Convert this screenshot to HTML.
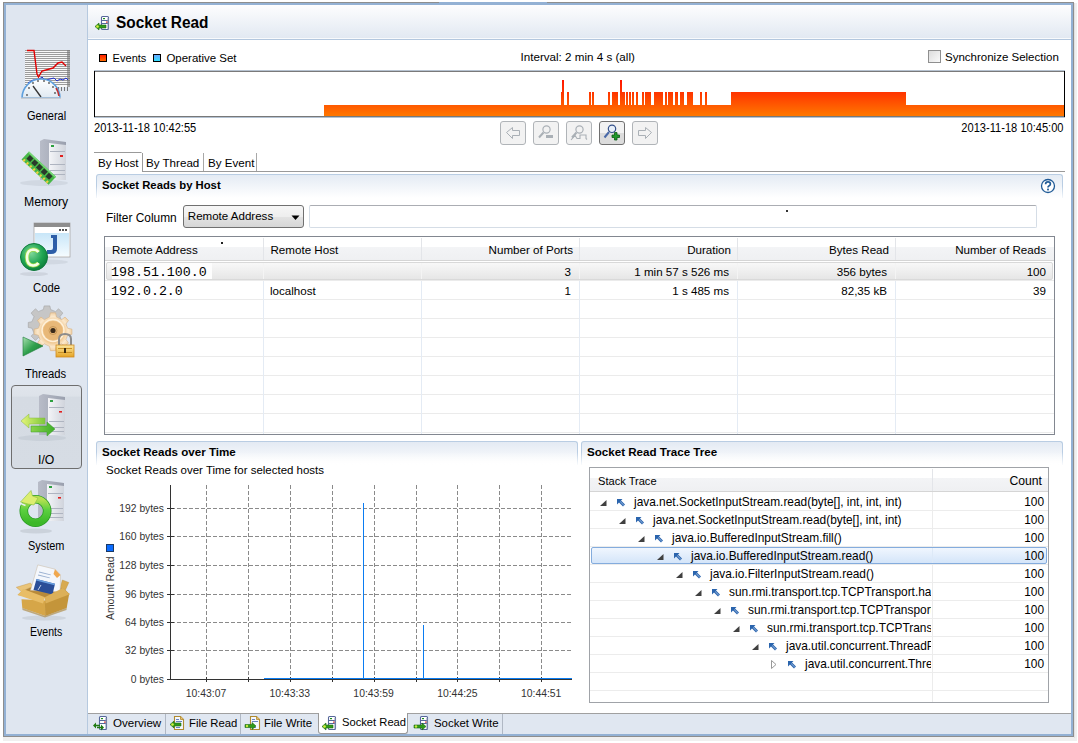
<!DOCTYPE html>
<html><head><meta charset="utf-8">
<style>
*{margin:0;padding:0;box-sizing:border-box}
html,body{width:1078px;height:743px;overflow:hidden;background:#fff}
body{position:relative;font-family:"Liberation Sans",sans-serif;font-size:11.6px;color:#000}
.a{position:absolute}
.t{position:absolute;white-space:nowrap;line-height:1}
.r{text-align:right}
</style></head><body>
<!-- outside area -->
<div class="a" style="left:3px;top:737px;width:1074px;height:4px;background:#f0f0f0"></div>
<div class="a" style="left:1074px;top:3px;width:3px;height:738px;background:#f0f0f0"></div>
<div class="a" style="left:1074px;top:3px;width:1px;height:735px;background:#e2e2e2"></div>
<!-- frame -->
<div class="a" style="left:3px;top:2px;width:1071px;height:735px;border:1px solid #8e8e8e;background:#93b1d4"></div>
<div class="a" style="left:439px;top:2px;width:108px;height:1px;background:#93b1d4"></div>
<!-- inner area -->
<div class="a" style="left:6px;top:5px;width:1065px;height:729px;background:#fff"></div>
<!-- sidebar -->
<div class="a" style="left:6px;top:5px;width:81px;height:729px;background:#dfe6f0"></div>
<div class="a" style="left:87px;top:5px;width:1px;height:729px;background:#b6c9df"></div>

<!-- sidebar selected box -->
<div class="a" style="left:11px;top:385px;width:71px;height:84px;border:1px solid #6e6e6e;border-radius:4px;background:linear-gradient(#e0e5ec 0%,#dde2e9 12%,#d5dbe3 14%,#d6dce4 100%)"></div>
<!-- sidebar labels -->
<div class="t" style="left:26.5px;top:109.54px;font-size:12.0px;transform:scaleX(0.916);transform-origin:0 0">General</div>
<div class="t" style="left:23.8px;top:195.54px;font-size:12.0px;transform:scaleX(1.020);transform-origin:0 0">Memory</div>
<div class="t" style="left:32.6px;top:281.54px;font-size:12.0px;transform:scaleX(0.941);transform-origin:0 0">Code</div>
<div class="t" style="left:24.9px;top:367.54px;font-size:12.0px;transform:scaleX(0.936);transform-origin:0 0">Threads</div>
<div class="t" style="left:37.7px;top:453.54px;font-size:12.0px;transform:scaleX(1.019);transform-origin:0 0">I/O</div>
<div class="t" style="left:27.7px;top:539.54px;font-size:12.0px;transform:scaleX(0.910);transform-origin:0 0">System</div>
<div class="t" style="left:29.9px;top:625.54px;font-size:12.0px;transform:scaleX(0.880);transform-origin:0 0">Events</div>
<svg class="a" style="left:0;top:0" width="88" height="713" viewBox="0 0 88 713">
<defs>
<linearGradient id="gauge" x1="0" y1="0" x2="0" y2="1"><stop offset="0" stop-color="#ffffff"/><stop offset="1" stop-color="#dfe9f2"/></linearGradient>
<linearGradient id="srv" x1="0" y1="0" x2="1" y2="0"><stop offset="0" stop-color="#b8bcc8"/><stop offset="1" stop-color="#9aa0ae"/></linearGradient>
<linearGradient id="srvf" x1="0" y1="0" x2="1" y2="0"><stop offset="0" stop-color="#f4f5f8"/><stop offset="1" stop-color="#d0d4dc"/></linearGradient>
<linearGradient id="win" x1="0" y1="0" x2="0" y2="1"><stop offset="0" stop-color="#c8e6f8"/><stop offset="1" stop-color="#f4fbff"/></linearGradient>
<radialGradient id="cg" cx="0.4" cy="0.35" r="0.7"><stop offset="0" stop-color="#7fd89a"/><stop offset="0.6" stop-color="#1fa552"/><stop offset="1" stop-color="#0c7a38"/></radialGradient>
<radialGradient id="gear" cx="0.5" cy="0.5" r="0.5"><stop offset="0" stop-color="#d9a868"/><stop offset="0.55" stop-color="#efc58c"/><stop offset="0.8" stop-color="#fbe8cc"/><stop offset="1" stop-color="#f0d2a8"/></radialGradient>
<linearGradient id="play" x1="0" y1="0" x2="1" y2="1"><stop offset="0" stop-color="#a8e0b0"/><stop offset="0.5" stop-color="#2fa04c"/><stop offset="1" stop-color="#1a7a34"/></linearGradient>
<linearGradient id="lock" x1="0" y1="0" x2="0" y2="1"><stop offset="0" stop-color="#fce7a0"/><stop offset="1" stop-color="#e5a424"/></linearGradient>
<linearGradient id="arL" x1="0" y1="0" x2="1" y2="0"><stop offset="0" stop-color="#e6f57a"/><stop offset="1" stop-color="#7cc83a"/></linearGradient>
<linearGradient id="arR" x1="0" y1="0" x2="1" y2="0"><stop offset="0" stop-color="#8bd34a"/><stop offset="1" stop-color="#3eae2a"/></linearGradient>
<linearGradient id="box" x1="0" y1="0" x2="0" y2="1"><stop offset="0" stop-color="#e8bf62"/><stop offset="1" stop-color="#c8963a"/></linearGradient>
<linearGradient id="paper" x1="0" y1="0" x2="0" y2="1"><stop offset="0" stop-color="#f6f8fc"/><stop offset="0.5" stop-color="#e8eef8"/><stop offset="0.52" stop-color="#4a84d0"/><stop offset="1" stop-color="#1c3f86"/></linearGradient>
</defs>
<!-- General -->
<g>
<rect x="25" y="50" width="45" height="37" fill="#f8f8f8"/>
<g fill="#9c9c9c">
<rect x="25" y="50" width="45" height="1"/><rect x="25" y="52" width="45" height="1"/><rect x="25" y="54" width="45" height="1"/><rect x="25" y="56" width="45" height="1"/><rect x="25" y="58" width="45" height="1"/><rect x="25" y="60" width="45" height="1"/><rect x="25" y="62" width="45" height="1"/><rect x="25" y="64" width="45" height="1"/><rect x="25" y="66" width="45" height="1"/><rect x="25" y="68" width="45" height="1"/><rect x="25" y="70" width="45" height="1"/><rect x="25" y="72" width="45" height="1"/><rect x="25" y="74" width="45" height="1"/><rect x="25" y="76" width="45" height="1"/><rect x="25" y="78" width="45" height="1"/><rect x="25" y="80" width="45" height="1"/><rect x="25" y="82" width="45" height="1"/><rect x="25" y="84" width="45" height="1"/>
</g>
<g fill="#777">
<rect x="67" y="50" width="3" height="37" opacity="0.6"/>
<rect x="58" y="87" width="1" height="4"/><rect x="61" y="87" width="1" height="4"/><rect x="64" y="87" width="1" height="4"/><rect x="67" y="87" width="1" height="4"/>
</g>
<polyline points="27,50.5 34,50.5 37,74 38.5,77 42,71 53,68 58,63 62,62 66,66" fill="none" stroke="#e00000" stroke-width="1.4"/>
<polyline points="28,83 33,80 38,80 42,77 45,80 50,79 54,78 57,81 60,79 63,80 66,78 68,80" fill="none" stroke="#2030d0" stroke-width="1"/>
<path d="M22 98 A19 19 0 0 1 60 98 Z" fill="url(#gauge)" stroke="#5ea0de" stroke-width="1.6"/>
<path d="M56 88 A19 19 0 0 1 59 96" fill="none" stroke="#c03030" stroke-width="1.6"/>
<g fill="#555">
<circle cx="27" cy="95" r="0.9"/><circle cx="29" cy="88" r="0.9"/><circle cx="33" cy="83" r="0.9"/><circle cx="38" cy="81" r="0.9"/><circle cx="44" cy="81" r="0.9"/><circle cx="49" cy="83" r="0.9"/><circle cx="53" cy="87" r="0.9"/><circle cx="55" cy="93" r="0.9"/>
</g>
<line x1="33" y1="86" x2="41" y2="97" stroke="#333" stroke-width="1.3"/>
<rect x="21" y="97.5" width="40" height="1.5" fill="#c8ccd2"/>
</g>
<!-- Memory -->
<g>
<ellipse cx="44" cy="183" rx="24" ry="3" fill="#cdd4de" opacity="0.8"/>
<path d="M40 141 L44 139 L66 142 L66 180 L40 180 Z" fill="url(#srv)"/>
<path d="M49 143 L66 145 L66 180 L49 180 Z" fill="url(#srvf)"/>
<rect x="51" y="145" width="3" height="2" fill="#2ea040"/>
<rect x="60" y="155" width="3" height="2" fill="#e02020"/>
<g fill="#aeb4c0"><rect x="50" y="151" width="15" height="1"/><rect x="50" y="164" width="15" height="1"/><rect x="50" y="170" width="15" height="1"/><rect x="50" y="174" width="15" height="1"/></g>
<g transform="translate(29,151.5) rotate(43)">
<rect x="0" y="0" width="37" height="11" fill="#48b848"/>
<rect x="0" y="0" width="37" height="1.5" fill="#7ad87a"/>
<g fill="#2a3a2a"><rect x="3" y="2" width="5" height="5"/><rect x="9.5" y="2" width="5" height="5"/><rect x="16" y="2" width="5" height="5"/><rect x="22.5" y="2" width="5" height="5"/><rect x="29" y="2" width="5" height="5"/></g>
<g fill="#f0d040"><rect x="1.5" y="8.5" width="2" height="2.5"/><rect x="6" y="8.5" width="2" height="2.5"/><rect x="10.5" y="8.5" width="2" height="2.5"/><rect x="15" y="8.5" width="2" height="2.5"/><rect x="19.5" y="8.5" width="2" height="2.5"/><rect x="24" y="8.5" width="2" height="2.5"/><rect x="28.5" y="8.5" width="2" height="2.5"/><rect x="33" y="8.5" width="2" height="2.5"/></g>
</g>
</g>
<!-- Code -->
<g>
<ellipse cx="46" cy="262" rx="22" ry="2.5" fill="#cdd4de" opacity="0.8"/>
<rect x="34" y="223" width="36" height="34" fill="#fff" stroke="#a8a8a8" stroke-width="0.8"/>
<rect x="34" y="223" width="36" height="4" fill="#8e8e8e"/>
<rect x="35" y="233" width="34" height="23" fill="url(#win)"/>
<g fill="#555"><rect x="59" y="229" width="2" height="2"/><rect x="62" y="229" width="2" height="2"/><rect x="65" y="229" width="2" height="2"/></g>
<path d="M51 235 L57 235 L57 249 Q57 254 51 254 L47 254 L47 250 L51 250 Q53 250 53 248 L53 238 L51 238 Z" fill="#2d5ea8"/>
<ellipse cx="34" cy="274" rx="14" ry="2" fill="#c9d0da" opacity="0.8"/>
<circle cx="34" cy="257" r="13.5" fill="url(#cg)" stroke="#0f7a3c" stroke-width="1"/>
<path d="M38.5 252 Q36.5 249.5 33 249.5 Q27 250 27 257.5 Q27 265 33 265.5 Q36.5 265.5 38.5 263" fill="none" stroke="#9ad84a" stroke-width="4.2"/><path d="M38.5 252 Q36.5 249.5 33 249.5 Q27 250 27 257.5 Q27 265 33 265.5 Q36.5 265.5 38.5 263" fill="none" stroke="#f6ffe8" stroke-width="2.6"/>
</g>
<!-- Threads -->
<g>
<g transform="translate(51,327)">
<path d="M-4 -21 L4 -21 L5 -16 L12 -13 L16 -17 L22 -11 L18 -6 L21 1 L26 2 L26 9 L21 10 L18 17 L22 21 L16 27 L12 23 L5 26 L4 31 L-4 31 L-5 26 L-12 23 L-16 27 L-22 21 L-18 17 L-21 10 L-26 9 L-26 2 L-21 1 L-18 -6 L-22 -11 L-16 -17 L-12 -13 L-5 -16 Z" transform="translate(-4,-6) scale(0.72)" fill="#c6c6c6" stroke="#a0a0a0" stroke-width="0.8"/>
<path d="M-3 -20 L3 -20 L4 -15 L10 -12 L14 -15 L18 -11 L15 -7 L17 -2 L22 -1 L22 5 L17 6 L15 11 L18 15 L14 19 L10 16 L4 19 L3 24 L-3 24 L-4 19 L-10 16 L-14 19 L-18 15 L-15 11 L-17 6 L-22 5 L-22 -1 L-17 -2 L-15 -7 L-18 -11 L-14 -15 L-10 -12 L-4 -15 Z" transform="translate(2,3) scale(0.86)" fill="url(#gear)" stroke="#d8b080" stroke-width="0.7"/>
<circle cx="2" cy="3.5" r="11" fill="none" stroke="#fff4e0" stroke-width="1.5" opacity="0.9"/><circle cx="2" cy="3.5" r="9.5" fill="#e8b878"/><circle cx="2" cy="3.5" r="2.6" fill="#3a2a1a"/><circle cx="2" cy="3.5" r="4" fill="none" stroke="#c89858" stroke-width="1"/>
</g>
<path d="M23 337 L43 346 L23 356 Z" fill="url(#play)" stroke="#1b7a38" stroke-width="0.6"/>
<path d="M59 346 L59 339 Q59 334 65 334 Q71 334 71 339 L71 346" fill="none" stroke="#8c8c8c" stroke-width="2"/>
<rect x="56" y="345" width="18" height="12" fill="url(#lock)" stroke="#d08a20" stroke-width="0.8"/>
<g fill="#c89028"><rect x="58" y="348" width="14" height="1"/><rect x="58" y="352" width="14" height="1"/></g>
<rect x="64" y="348" width="2" height="5" fill="#3a2a10"/>
</g>
<!-- I/O -->
<g>
<ellipse cx="42" cy="438" rx="24" ry="3" fill="#c6cdd6" opacity="0.8"/>
<path d="M39 396 L43 394 L65 397 L65 435 L39 435 Z" fill="url(#srv)"/>
<path d="M48 398 L65 400 L65 435 L48 435 Z" fill="url(#srvf)"/>
<rect x="50" y="400" width="3" height="2" fill="#2ea040"/>
<rect x="59" y="411" width="3" height="1.6" fill="#e02020"/>
<g fill="#aeb4c0"><rect x="49" y="407" width="15" height="1"/><rect x="49" y="421" width="15" height="1"/><rect x="49" y="427" width="15" height="1"/><rect x="49" y="431" width="15" height="1"/></g>
<path d="M21 421 L29 414 L29 418 L45 418 L45 424 L29 424 L29 428 Z" fill="url(#arL)" stroke="#88b840" stroke-width="0.5"/>
<path d="M55 429 L47 422 L47 426 L31 426 L31 432 L47 432 L47 436 Z" fill="url(#arR)" stroke="#3a9a2a" stroke-width="0.5"/>
</g>
<!-- System -->
<g>
<path d="M38 482 L42 480 L64 483 L64 521 L38 521 Z" fill="url(#srv)"/>
<path d="M47 484 L64 486 L64 521 L47 521 Z" fill="url(#srvf)"/>
<rect x="49" y="486" width="3" height="2" fill="#2ea040"/>
<rect x="58" y="497" width="3" height="1.6" fill="#e02020"/>
<g fill="#aeb4c0"><rect x="48" y="493" width="15" height="1"/><rect x="48" y="508" width="15" height="1"/><rect x="48" y="513" width="15" height="1"/><rect x="48" y="517" width="15" height="1"/></g>
<ellipse cx="36" cy="531" rx="16" ry="2.5" fill="#c6cdd6" opacity="0.8"/>
<defs><linearGradient id="ring" x1="0" y1="0" x2="0" y2="1"><stop offset="0" stop-color="#b8e050"/><stop offset="0.45" stop-color="#5cd040"/><stop offset="1" stop-color="#3cb828"/></linearGradient></defs>
<circle cx="35.5" cy="511" r="11.7" fill="none" stroke="#2a9a24" stroke-width="8.6"/>
<circle cx="35.5" cy="511" r="11.7" fill="none" stroke="url(#ring)" stroke-width="7"/>
<path d="M19.5 503 L25.5 505.5" stroke="#e8eef4" stroke-width="1.4"/>
<path d="M20.5 502 L31 490.5 L32.5 496 L38 498 L34 505 L28 504 Z" fill="#dcee70" stroke="#8cc040" stroke-width="0.6"/>
</g>
<!-- Events -->
<g>
<ellipse cx="44" cy="618" rx="22" ry="2.5" fill="#c6cdd6" opacity="0.7"/>
<path d="M62.4 580 L68.8 582.5 L65.4 590 L60.2 587.7 Z" fill="#d8aa50" stroke="#b88a30" stroke-width="0.4"/>
<path d="M16.3 587.3 L30.5 583 L32.7 586.4 L21.5 591.6 Z" fill="#eac478" stroke="#c09040" stroke-width="0.4"/>
<path d="M21.5 591.6 L32.7 586.4 L60.2 587.7 L65.4 590 L69.7 594.2 L44.7 598 L17.6 595 Z" fill="#b88a3a"/>
<path d="M37.8 564.9 L55 569.2 L60.5 575 L60.2 592 L30.5 590.3 Z" fill="#f4f7fc" stroke="#c8b8a0" stroke-width="0.5"/>
<path d="M55 569.2 L60.5 575 L57 578 L53.5 574 Z" fill="#f0a850"/>
<g fill="#9ab0d0"><rect x="39" y="573" width="12" height="0.9" transform="rotate(14 45 573)"/><rect x="38" y="576" width="12" height="0.9" transform="rotate(14 44 576)"/></g>
<path d="M36.5 579.1 L55 583.7 L52.5 594.5 L33.5 590 Z" fill="#2a4e98"/>
<path d="M36.5 579.1 L55 583.7 L54.6 585.2 L36.1 580.6 Z" fill="#6aa0e0"/>
<path d="M38 590 L41 585" stroke="#e8f0ff" stroke-width="0.8"/>
<path d="M21.5 599.3 L45.2 600.5 L45.4 615.9 L22.3 608 Z" fill="#d6a648"/>
<path d="M44.9 600.5 L69.3 593.3 L66.7 608 L45.2 615.9 Z" fill="#c4953a"/>
<path d="M17.6 595 L23.2 589 L45 597.2 L43 603.6 Z" fill="#e8bd66"/>
<path d="M44.7 597.2 L62.8 588.1 L69.7 594.2 L45.6 603.6 Z" fill="#dcb058"/>
<path d="M22.3 608 L44.3 615.7 L45.6 615.7 L66.7 608 L66.5 610 L45 617.5 L22.5 610 Z" fill="#a88030" opacity="0.6"/>
</g>
</svg>

<!-- header -->
<div class="a" style="left:88px;top:5px;width:983px;height:33px;background:linear-gradient(#fdfdfe,#e2e9f2)"></div>
<div class="a" style="left:88px;top:38px;width:983px;height:1px;background:#f8fafc"></div>
<div class="a" style="left:88px;top:39px;width:983px;height:1px;background:#b3c7de"></div>
<div class="t" style="left:115.5px;top:14.6px;font-size:15.8px;font-weight:bold;transform:scaleX(0.975);transform-origin:0 0">Socket Read</div>


<!-- legend -->
<div class="a" style="left:99px;top:54px;width:8px;height:8px;border:1px solid #000;background:linear-gradient(#ff2000,#ff6a00)"></div>
<div class="t" style="left:112.6px;top:52.9px;font-size:11.05px">Events</div>
<div class="a" style="left:153px;top:54px;width:8px;height:8px;border:1px solid #000;background:linear-gradient(#6aa8ff,#30e0ff)"></div>
<div class="t" style="left:166.4px;top:52.6px;font-size:11.48px">Operative Set</div>
<div class="t" style="left:520.5px;top:51.3px;font-size:11.64px">Interval: 2 min 4 s (all)</div>
<div class="a" style="left:928px;top:50px;width:13px;height:13px;border:1px solid #8f8f8f;background:linear-gradient(135deg,#dcdcdc,#fafafa)"></div>
<div class="t" style="left:945px;top:52px;font-size:11.5px">Synchronize Selection</div>
<!-- timeline chart -->
<svg class="a" style="left:0;top:0" width="1078" height="130" viewBox="0 0 1078 130">
<defs><linearGradient id="og" x1="0" y1="72" x2="0" y2="116" gradientUnits="userSpaceOnUse"><stop offset="0" stop-color="#ff0000"/><stop offset="0.45" stop-color="#ff3300"/><stop offset="1" stop-color="#ff7800"/></linearGradient></defs>
<rect x="94" y="70" width="971" height="1" fill="#b6c2d0"/>
<rect x="94" y="71" width="971" height="1" fill="#7a7a7a"/>
<rect x="94" y="71" width="1" height="46" fill="#000"/>
<rect x="1064" y="71" width="1" height="46" fill="#000"/>
<g fill="url(#og)"><rect x="324" y="105" width="740" height="11"/><rect x="561" y="92" width="1" height="13"/><rect x="567" y="92" width="2" height="13"/><rect x="589" y="92" width="2" height="13"/><rect x="592" y="92" width="2" height="13"/><rect x="608" y="92" width="2" height="13"/><rect x="612" y="92" width="6" height="13"/><rect x="622" y="92" width="3" height="13"/><rect x="626" y="92" width="2" height="13"/><rect x="629" y="92" width="2" height="13"/><rect x="632" y="92" width="2" height="13"/><rect x="636" y="92" width="2" height="13"/><rect x="642" y="92" width="2" height="13"/><rect x="645" y="92" width="6" height="13"/><rect x="654" y="92" width="9" height="13"/><rect x="665" y="92" width="2" height="13"/><rect x="668" y="92" width="5" height="13"/><rect x="675" y="92" width="3" height="13"/><rect x="680" y="92" width="4" height="13"/><rect x="687" y="92" width="6" height="13"/><rect x="700" y="92" width="2" height="13"/><rect x="705" y="92" width="2" height="13"/><rect x="731" y="92" width="175" height="13"/><rect x="562" y="80" width="2" height="25"/><rect x="620" y="80" width="2" height="25"/></g>
<rect x="94" y="116" width="971" height="1" fill="#000" opacity="0.53"/><rect x="94" y="117" width="971" height="1" fill="#b4c2d2"/>
</svg>
<div class="t" style="left:94px;top:121.8px;font-size:12px;transform:scaleX(0.925);transform-origin:0 0">2013-11-18 10:42:55</div>
<div class="t r" style="right:14px;top:121.8px;font-size:12px;transform:scaleX(0.925);transform-origin:100% 0">2013-11-18 10:45:00</div>
<!-- nav buttons -->
<div class="a" style="left:500px;top:121px;width:26px;height:24px;border:1px solid #b0b4b8;border-radius:3px;background:#f2f2f2"></div>
<div class="a" style="left:533px;top:121px;width:26px;height:24px;border:1px solid #b0b4b8;border-radius:3px;background:#f2f2f2"></div>
<div class="a" style="left:566px;top:121px;width:26px;height:24px;border:1px solid #b0b4b8;border-radius:3px;background:#f2f2f2"></div>
<div class="a" style="left:599px;top:121px;width:26px;height:24px;border:1px solid #707070;border-radius:3px;background:linear-gradient(#f2f2f2 50%,#dcdcdc 50%)"></div>
<div class="a" style="left:632px;top:121px;width:26px;height:24px;border:1px solid #b0b4b8;border-radius:3px;background:#f2f2f2"></div>


<!-- sub tabs -->
<div class="a" style="left:94px;top:152px;width:47px;height:1px;background:#9a9a9a"></div>
<div class="a" style="left:142px;top:153px;width:1px;height:19px;background:#9a9a9a"></div><div class="a" style="left:141px;top:152px;width:1px;height:1px;background:#c8c8c8"></div>
<div class="a" style="left:143px;top:171px;width:922px;height:1px;background:#9a9a9a"></div>
<div class="a" style="left:203px;top:153px;width:1px;height:18px;background:#a8a8a8"></div>
<div class="a" style="left:256px;top:153px;width:1px;height:18px;background:#a8a8a8"></div>
<div class="t" style="left:98px;top:157px;font-size:11.6px">By Host</div>
<div class="t" style="left:146px;top:157px;font-size:11.6px">By Thread</div>
<div class="t" style="left:208px;top:157px;font-size:11.6px">By Event</div>
<!-- group box: Socket Reads by Host -->
<div class="a" style="left:96px;top:174px;width:967px;height:24px;border:1px solid #b9cde3;border-bottom:none;border-radius:3px 3px 0 0;background:linear-gradient(#e4ebf4,#fff)"></div>
<div class="a" style="left:95px;top:186px;width:3px;height:14px;background:linear-gradient(rgba(255,255,255,0),#fff)"></div>
<div class="a" style="left:1061px;top:186px;width:3px;height:14px;background:linear-gradient(rgba(255,255,255,0),#fff)"></div>
<div class="t" style="left:102px;top:180px;font-size:11.3px;font-weight:bold">Socket Reads by Host</div>
<svg class="a" style="left:1040px;top:178px" width="16" height="16" viewBox="0 0 16 16"><circle cx="8" cy="8" r="6.5" fill="#fff" stroke="#1f5a96" stroke-width="1.3"/><path d="M5.6 6.2 Q5.6 3.9 8 3.9 Q10.4 3.9 10.4 6 Q10.4 7.3 8.9 8 Q8 8.5 8 9.6" fill="none" stroke="#1f5a96" stroke-width="1.7"/><rect x="7.1" y="10.6" width="1.8" height="1.8" fill="#1f5a96"/></svg>
<!-- filter -->
<div class="t" style="left:106px;top:212.5px;font-size:11.9px">Filter Column</div>
<div class="a" style="left:183px;top:205px;width:121px;height:23px;border:1px solid #707070;border-radius:3px;background:linear-gradient(#f6f6f6 0%,#eeeeee 50%,#e3e3e3 51%,#d6d6d6 100%)"></div>
<div class="t" style="left:187.8px;top:211px;font-size:11.56px">Remote Address</div>
<svg class="a" style="left:291px;top:215px" width="9" height="6"><path d="M0.5 0.5 L8.5 0.5 L4.5 5 Z" fill="#000"/></svg>
<div class="a" style="left:309px;top:205px;width:728px;height:23px;border:1px solid #d5dde6;border-top-color:#abadb3;border-radius:2px;background:#fff"></div>
<div class="a" style="left:786px;top:210px;width:2px;height:2px;background:#333"></div>
<div class="a" style="left:221px;top:242px;width:2px;height:2px;background:#222;z-index:5"></div>
<!-- table -->
<div class="a" style="left:104px;top:236px;width:951px;height:199px;border:1px solid #828790;background:#fff"></div>
<div class="a" style="left:105px;top:247px;width:949px;height:13px;background:linear-gradient(#f3f4f6,#eff0f2)"></div>
<div class="a" style="left:105px;top:260px;width:949px;height:1px;background:#d5d5d5"></div>

<div class="a" style="left:263px;top:238px;width:1px;height:22px;background:#e3e5e9"></div>
<div class="a" style="left:421px;top:238px;width:1px;height:22px;background:#e3e5e9"></div>
<div class="a" style="left:579px;top:238px;width:1px;height:22px;background:#e3e5e9"></div>
<div class="a" style="left:737px;top:238px;width:1px;height:22px;background:#e3e5e9"></div>
<div class="a" style="left:895px;top:238px;width:1px;height:22px;background:#e3e5e9"></div>
<div class="a" style="left:105px;top:280px;width:949px;height:1px;background:#ebebeb"></div>
<div class="a" style="left:105px;top:299px;width:949px;height:1px;background:#ebebeb"></div>
<div class="a" style="left:105px;top:318px;width:949px;height:1px;background:#ebebeb"></div>
<div class="a" style="left:105px;top:337px;width:949px;height:1px;background:#ebebeb"></div>
<div class="a" style="left:105px;top:356px;width:949px;height:1px;background:#ebebeb"></div>
<div class="a" style="left:105px;top:375px;width:949px;height:1px;background:#ebebeb"></div>
<div class="a" style="left:105px;top:394px;width:949px;height:1px;background:#ebebeb"></div>
<div class="a" style="left:105px;top:413px;width:949px;height:1px;background:#ebebeb"></div>
<div class="a" style="left:105px;top:432px;width:949px;height:1px;background:#ebebeb"></div>
<div class="a" style="left:263px;top:281px;width:1px;height:153px;background:#e4ebf4"></div>
<div class="a" style="left:421px;top:281px;width:1px;height:153px;background:#e4ebf4"></div>
<div class="a" style="left:579px;top:281px;width:1px;height:153px;background:#e4ebf4"></div>
<div class="a" style="left:737px;top:281px;width:1px;height:153px;background:#e4ebf4"></div>
<div class="a" style="left:895px;top:281px;width:1px;height:153px;background:#e4ebf4"></div>
<div class="a" style="left:106px;top:262px;width:947px;height:18px;border:1px solid #d9d9d9;border-radius:2px;background:linear-gradient(#f8f8f8,#e6e6e6)"></div>
<div class="a" style="left:263px;top:263px;width:1px;height:16px;background:#f4f4f4"></div>
<div class="a" style="left:421px;top:263px;width:1px;height:16px;background:#f4f4f4"></div>
<div class="a" style="left:579px;top:263px;width:1px;height:16px;background:#f4f4f4"></div>
<div class="a" style="left:737px;top:263px;width:1px;height:16px;background:#f4f4f4"></div>
<div class="a" style="left:895px;top:263px;width:1px;height:16px;background:#f4f4f4"></div>
<div class="a" style="left:112px;top:263px;width:100px;height:16px;background:#fdfdfd"></div>
<div class="t" style="left:112px;top:244px">Remote Address</div>
<div class="t" style="left:270.5px;top:244px">Remote Host</div>
<div class="t r" style="right:505px;top:244px">Number of Ports</div>
<div class="t r" style="right:347px;top:244px">Duration</div>
<div class="t r" style="right:189px;top:244px">Bytes Read</div>
<div class="t r" style="right:32px;top:244px">Number of Reads</div>
<div class="t" style="left:111px;top:265.7px;font-family:'Liberation Mono',monospace;font-size:13.3px;color:#000">198.51.100.0</div>
<div class="t r" style="right:507px;top:266px">3</div>
<div class="t r" style="right:349px;top:266px">1 min 57 s 526 ms</div>
<div class="t r" style="right:191px;top:266px">356 bytes</div>
<div class="t r" style="right:32px;top:266px">100</div>
<div class="t" style="left:111px;top:284.7px;font-family:'Liberation Mono',monospace;font-size:13.3px;color:#000">192.0.2.0</div>
<div class="t" style="left:270px;top:285px">localhost</div>
<div class="t r" style="right:507px;top:285px">1</div>
<div class="t r" style="right:349px;top:285px">1 s 485 ms</div>
<div class="t r" style="right:191px;top:285px">82,35 kB</div>
<div class="t r" style="right:32px;top:285px">39</div>
<!-- bottom tab bar -->
<div class="a" style="left:88px;top:713px;width:983px;height:1px;background:#a0a0a0"></div>
<div class="a" style="left:88px;top:714px;width:983px;height:20px;background:#e0e7f1"></div>


<!-- bottom-left panel -->
<div class="a" style="left:96px;top:441px;width:482px;height:24px;border:1px solid #b9cde3;border-bottom:none;border-radius:3px 3px 0 0;background:linear-gradient(#e3eaf3,#fff)"></div>
<div class="a" style="left:95px;top:452px;width:484px;height:14px;background:linear-gradient(rgba(255,255,255,0),#fff)"></div>
<div class="t" style="left:102px;top:446px;font-size:11.6px;font-weight:bold">Socket Reads over Time</div>
<div class="t" style="left:106px;top:465px;font-size:11.47px">Socket Reads over Time for selected hosts</div>
<!-- bottom-right panel -->
<div class="a" style="left:581px;top:441px;width:482px;height:24px;border:1px solid #b9cde3;border-bottom:none;border-radius:3px 3px 0 0;background:linear-gradient(#e3eaf3,#fff)"></div>
<div class="a" style="left:580px;top:452px;width:484px;height:14px;background:linear-gradient(rgba(255,255,255,0),#fff)"></div>
<div class="t" style="left:587px;top:446px;font-size:11.6px;font-weight:bold">Socket Read Trace Tree</div>

<svg class="a" style="left:0;top:0" width="1078" height="743" viewBox="0 0 1078 743" shape-rendering="crispEdges">
<line x1="171" y1="650.5" x2="572" y2="650.5" stroke="#8a8a8a" stroke-dasharray="4 2"/>
<line x1="171" y1="622.5" x2="572" y2="622.5" stroke="#8a8a8a" stroke-dasharray="4 2"/>
<line x1="171" y1="594.5" x2="572" y2="594.5" stroke="#8a8a8a" stroke-dasharray="4 2"/>
<line x1="171" y1="565.5" x2="572" y2="565.5" stroke="#8a8a8a" stroke-dasharray="4 2"/>
<line x1="171" y1="536.5" x2="572" y2="536.5" stroke="#8a8a8a" stroke-dasharray="4 2"/>
<line x1="171" y1="508.5" x2="572" y2="508.5" stroke="#8a8a8a" stroke-dasharray="4 2"/>
<line x1="206.5" y1="485" x2="206.5" y2="679" stroke="#8a8a8a" stroke-dasharray="4 2"/>
<line x1="248.5" y1="485" x2="248.5" y2="679" stroke="#8a8a8a" stroke-dasharray="4 2"/>
<line x1="290.5" y1="485" x2="290.5" y2="679" stroke="#8a8a8a" stroke-dasharray="4 2"/>
<line x1="332.5" y1="485" x2="332.5" y2="679" stroke="#8a8a8a" stroke-dasharray="4 2"/>
<line x1="374.5" y1="485" x2="374.5" y2="679" stroke="#8a8a8a" stroke-dasharray="4 2"/>
<line x1="416.5" y1="485" x2="416.5" y2="679" stroke="#8a8a8a" stroke-dasharray="4 2"/>
<line x1="457.5" y1="485" x2="457.5" y2="679" stroke="#8a8a8a" stroke-dasharray="4 2"/>
<line x1="499.5" y1="485" x2="499.5" y2="679" stroke="#8a8a8a" stroke-dasharray="4 2"/>
<line x1="541.5" y1="485" x2="541.5" y2="679" stroke="#8a8a8a" stroke-dasharray="4 2"/>
<rect x="170" y="485" width="1" height="195" fill="#333"/>
<rect x="167" y="679" width="405" height="1" fill="#333"/>
<rect x="167" y="650" width="7" height="1" fill="#333"/>
<rect x="167" y="622" width="7" height="1" fill="#333"/>
<rect x="167" y="594" width="7" height="1" fill="#333"/>
<rect x="167" y="565" width="7" height="1" fill="#333"/>
<rect x="167" y="536" width="7" height="1" fill="#333"/>
<rect x="167" y="508" width="7" height="1" fill="#333"/>
<rect x="206" y="677" width="1" height="5" fill="#333"/>
<rect x="248" y="677" width="1" height="5" fill="#333"/>
<rect x="290" y="677" width="1" height="5" fill="#333"/>
<rect x="332" y="677" width="1" height="5" fill="#333"/>
<rect x="374" y="677" width="1" height="5" fill="#333"/>
<rect x="416" y="677" width="1" height="5" fill="#333"/>
<rect x="457" y="677" width="1" height="5" fill="#333"/>
<rect x="499" y="677" width="1" height="5" fill="#333"/>
<rect x="541" y="677" width="1" height="5" fill="#333"/>
<rect x="264" y="678" width="308" height="1" fill="#0a7cf2"/>
<rect x="363" y="503" width="1" height="176" fill="#0a7cf2"/>
<rect x="423" y="625" width="1" height="54" fill="#0a7cf2"/>
<rect x="106.5" y="544.5" width="7" height="7" fill="#0a6cff" stroke="#1a3a66"/>
</svg>
<div class="t r" style="right:914px;top:675px;font-size:10.3px;color:#333">0 bytes</div>
<div class="t r" style="right:914px;top:646px;font-size:10.3px;color:#333">32 bytes</div>
<div class="t r" style="right:914px;top:618px;font-size:10.3px;color:#333">64 bytes</div>
<div class="t r" style="right:914px;top:590px;font-size:10.3px;color:#333">96 bytes</div>
<div class="t r" style="right:914px;top:561px;font-size:10.3px;color:#333">128 bytes</div>
<div class="t r" style="right:914px;top:532px;font-size:10.3px;color:#333">160 bytes</div>
<div class="t r" style="right:914px;top:504px;font-size:10.3px;color:#333">192 bytes</div>
<div class="t" style="left:176.0px;width:60px;text-align:center;top:689px;font-size:10.4px;color:#333">10:43:07</div>
<div class="t" style="left:259.8px;width:60px;text-align:center;top:689px;font-size:10.4px;color:#333">10:43:33</div>
<div class="t" style="left:343.6px;width:60px;text-align:center;top:689px;font-size:10.4px;color:#333">10:43:59</div>
<div class="t" style="left:427.4px;width:60px;text-align:center;top:689px;font-size:10.4px;color:#333">10:44:25</div>
<div class="t" style="left:511.2px;width:60px;text-align:center;top:689px;font-size:10.4px;color:#333">10:44:51</div>
<div class="t" style="left:106px;top:620px;font-size:10.4px;color:#333;transform:rotate(-90deg);transform-origin:0 0">Amount Read</div>

<div class="a" style="left:589px;top:467px;width:460px;height:236px;border:1px solid #a0a3a8;background:#fff"></div>
<div class="a" style="left:590px;top:478px;width:458px;height:13px;background:linear-gradient(#f3f4f6,#eff0f2)"></div>
<div class="a" style="left:590px;top:491px;width:458px;height:1px;background:#d5d5d5"></div>
<div class="a" style="left:932px;top:469px;width:1px;height:22px;background:#e3e5e9"></div>
<div class="t" style="left:598px;top:476px;font-size:11.1px">Stack Trace</div>
<div class="t r" style="right:36px;top:475px;font-size:12.2px">Count</div>

<div class="a" style="left:590px;top:510px;width:458px;height:1px;background:#ececec"></div>
<div class="a" style="left:590px;top:528px;width:458px;height:1px;background:#ececec"></div>
<div class="a" style="left:590px;top:546px;width:458px;height:1px;background:#ececec"></div>
<div class="a" style="left:590px;top:564px;width:458px;height:1px;background:#ececec"></div>
<div class="a" style="left:590px;top:582px;width:458px;height:1px;background:#ececec"></div>
<div class="a" style="left:590px;top:600px;width:458px;height:1px;background:#ececec"></div>
<div class="a" style="left:590px;top:618px;width:458px;height:1px;background:#ececec"></div>
<div class="a" style="left:590px;top:636px;width:458px;height:1px;background:#ececec"></div>
<div class="a" style="left:590px;top:654px;width:458px;height:1px;background:#ececec"></div>
<div class="a" style="left:590px;top:672px;width:458px;height:1px;background:#ececec"></div>
<div class="a" style="left:590px;top:690px;width:458px;height:1px;background:#ececec"></div>
<div class="a" style="left:932px;top:492px;width:1px;height:210px;background:#ececec"></div>
<div class="a" style="left:591px;top:547px;width:456px;height:17px;border:1px solid #84acdd;border-radius:2px;background:linear-gradient(#f0f6fe,#d4e5f9)"></div>
<div class="a" style="left:932px;top:548px;width:1px;height:15px;background:#dde9f7"></div>
<div class="a" style="left:590px;top:492px;width:341px;height:190px;overflow:hidden">
<svg class="a" style="left:10px;top:8px" width="7" height="6"><path d="M6.5 0 L6.5 6 L0 6 Z" fill="#404040"/></svg>
<svg class="a" style="left:27px;top:7px" width="9" height="8" viewBox="0 0 9 8"><path d="M0 0 L5.5 0 L4 1.5 L8 5.5 L6 7.5 L2 3.5 L0 5.5 Z" fill="#2a64ad"/><path d="M3.2 2.6 L6.8 6.2" stroke="#a8c4e8" stroke-width="0.9"/></svg>
<div class="t" style="left:44px;top:4.5px;font-size:11.9px">java.net.SocketInputStream.read(byte[], int, int, int)</div>
<svg class="a" style="left:29px;top:26px" width="7" height="6"><path d="M6.5 0 L6.5 6 L0 6 Z" fill="#404040"/></svg>
<svg class="a" style="left:46px;top:25px" width="9" height="8" viewBox="0 0 9 8"><path d="M0 0 L5.5 0 L4 1.5 L8 5.5 L6 7.5 L2 3.5 L0 5.5 Z" fill="#2a64ad"/><path d="M3.2 2.6 L6.8 6.2" stroke="#a8c4e8" stroke-width="0.9"/></svg>
<div class="t" style="left:63px;top:22.5px;font-size:11.9px">java.net.SocketInputStream.read(byte[], int, int)</div>
<svg class="a" style="left:48px;top:44px" width="7" height="6"><path d="M6.5 0 L6.5 6 L0 6 Z" fill="#404040"/></svg>
<svg class="a" style="left:65px;top:43px" width="9" height="8" viewBox="0 0 9 8"><path d="M0 0 L5.5 0 L4 1.5 L8 5.5 L6 7.5 L2 3.5 L0 5.5 Z" fill="#2a64ad"/><path d="M3.2 2.6 L6.8 6.2" stroke="#a8c4e8" stroke-width="0.9"/></svg>
<div class="t" style="left:82px;top:40.5px;font-size:11.9px">java.io.BufferedInputStream.fill()</div>
<svg class="a" style="left:67px;top:62px" width="7" height="6"><path d="M6.5 0 L6.5 6 L0 6 Z" fill="#404040"/></svg>
<svg class="a" style="left:84px;top:61px" width="9" height="8" viewBox="0 0 9 8"><path d="M0 0 L5.5 0 L4 1.5 L8 5.5 L6 7.5 L2 3.5 L0 5.5 Z" fill="#2a64ad"/><path d="M3.2 2.6 L6.8 6.2" stroke="#a8c4e8" stroke-width="0.9"/></svg>
<div class="t" style="left:101px;top:58.5px;font-size:11.9px">java.io.BufferedInputStream.read()</div>
<svg class="a" style="left:86px;top:80px" width="7" height="6"><path d="M6.5 0 L6.5 6 L0 6 Z" fill="#404040"/></svg>
<svg class="a" style="left:103px;top:79px" width="9" height="8" viewBox="0 0 9 8"><path d="M0 0 L5.5 0 L4 1.5 L8 5.5 L6 7.5 L2 3.5 L0 5.5 Z" fill="#2a64ad"/><path d="M3.2 2.6 L6.8 6.2" stroke="#a8c4e8" stroke-width="0.9"/></svg>
<div class="t" style="left:120px;top:76.5px;font-size:11.9px">java.io.FilterInputStream.read()</div>
<svg class="a" style="left:105px;top:98px" width="7" height="6"><path d="M6.5 0 L6.5 6 L0 6 Z" fill="#404040"/></svg>
<svg class="a" style="left:122px;top:97px" width="9" height="8" viewBox="0 0 9 8"><path d="M0 0 L5.5 0 L4 1.5 L8 5.5 L6 7.5 L2 3.5 L0 5.5 Z" fill="#2a64ad"/><path d="M3.2 2.6 L6.8 6.2" stroke="#a8c4e8" stroke-width="0.9"/></svg>
<div class="t" style="left:139px;top:94.5px;font-size:11.9px">sun.rmi.transport.tcp.TCPTransport.handleMessages(Connection, boolean)</div>
<svg class="a" style="left:124px;top:116px" width="7" height="6"><path d="M6.5 0 L6.5 6 L0 6 Z" fill="#404040"/></svg>
<svg class="a" style="left:141px;top:115px" width="9" height="8" viewBox="0 0 9 8"><path d="M0 0 L5.5 0 L4 1.5 L8 5.5 L6 7.5 L2 3.5 L0 5.5 Z" fill="#2a64ad"/><path d="M3.2 2.6 L6.8 6.2" stroke="#a8c4e8" stroke-width="0.9"/></svg>
<div class="t" style="left:158px;top:112.5px;font-size:11.9px">sun.rmi.transport.tcp.TCPTransport$ConnectionHandler.run0()</div>
<svg class="a" style="left:143px;top:134px" width="7" height="6"><path d="M6.5 0 L6.5 6 L0 6 Z" fill="#404040"/></svg>
<svg class="a" style="left:160px;top:133px" width="9" height="8" viewBox="0 0 9 8"><path d="M0 0 L5.5 0 L4 1.5 L8 5.5 L6 7.5 L2 3.5 L0 5.5 Z" fill="#2a64ad"/><path d="M3.2 2.6 L6.8 6.2" stroke="#a8c4e8" stroke-width="0.9"/></svg>
<div class="t" style="left:177px;top:130.5px;font-size:11.9px">sun.rmi.transport.tcp.TCPTransport$ConnectionHandler.run()</div>
<svg class="a" style="left:162px;top:152px" width="7" height="6"><path d="M6.5 0 L6.5 6 L0 6 Z" fill="#404040"/></svg>
<svg class="a" style="left:179px;top:151px" width="9" height="8" viewBox="0 0 9 8"><path d="M0 0 L5.5 0 L4 1.5 L8 5.5 L6 7.5 L2 3.5 L0 5.5 Z" fill="#2a64ad"/><path d="M3.2 2.6 L6.8 6.2" stroke="#a8c4e8" stroke-width="0.9"/></svg>
<div class="t" style="left:196px;top:148.5px;font-size:11.9px">java.util.concurrent.ThreadPoolExecutor.runWorker(ThreadPoolExecutor$Worker)</div>
<svg class="a" style="left:181px;top:168px" width="6" height="10"><path d="M0.5 0.5 L5 4.5 L0.5 8.5 Z" fill="none" stroke="#999"/></svg>
<svg class="a" style="left:198px;top:169px" width="9" height="8" viewBox="0 0 9 8"><path d="M0 0 L5.5 0 L4 1.5 L8 5.5 L6 7.5 L2 3.5 L0 5.5 Z" fill="#2a64ad"/><path d="M3.2 2.6 L6.8 6.2" stroke="#a8c4e8" stroke-width="0.9"/></svg>
<div class="t" style="left:215px;top:166.5px;font-size:11.9px">java.util.concurrent.ThreadPoolExecutor$Worker.run()</div>
</div>
<div class="t r" style="right:34px;top:496.5px;font-size:11.9px">100</div>
<div class="t r" style="right:34px;top:514.5px;font-size:11.9px">100</div>
<div class="t r" style="right:34px;top:532.5px;font-size:11.9px">100</div>
<div class="t r" style="right:34px;top:550.5px;font-size:11.9px">100</div>
<div class="t r" style="right:34px;top:568.5px;font-size:11.9px">100</div>
<div class="t r" style="right:34px;top:586.5px;font-size:11.9px">100</div>
<div class="t r" style="right:34px;top:604.5px;font-size:11.9px">100</div>
<div class="t r" style="right:34px;top:622.5px;font-size:11.9px">100</div>
<div class="t r" style="right:34px;top:640.5px;font-size:11.9px">100</div>
<div class="t r" style="right:34px;top:658.5px;font-size:11.9px">100</div>

<div class="a" style="left:165px;top:714px;width:1px;height:20px;background:#b0b8c4"></div>
<div class="a" style="left:240px;top:714px;width:1px;height:20px;background:#b0b8c4"></div>
<div class="a" style="left:502px;top:714px;width:1px;height:20px;background:#b0b8c4"></div>
<div class="a" style="left:318px;top:713px;width:90px;height:21px;background:#fff;border:1px solid #9a9a9a;border-top:none;border-radius:0 0 3px 3px"></div>
<div class="t" style="left:113px;top:718px;font-size:11.57px">Overview</div>
<div class="t" style="left:189px;top:718px;font-size:10.75px;font-size:11.3px">File Read</div>
<div class="t" style="left:264px;top:718px;font-size:11.46px">File Write</div>
<div class="t" style="left:342px;top:717px;font-size:11.2px">Socket Read</div>
<div class="t" style="left:434px;top:718px;font-size:11.43px">Socket Write</div>

<svg class="a" style="left:0;top:0" width="1078" height="743" viewBox="0 0 1078 743"><rect x="101.5" y="16.5" width="7" height="13" rx="1" fill="#fff" stroke="#56679a" stroke-width="1.1"/><rect x="102" y="20" width="6" height="1" fill="#56679a"/><rect x="102" y="23" width="6" height="1" fill="#56679a"/><rect x="103" y="18" width="2" height="1.2" fill="#1e8a1e"/><rect x="106" y="21.5" width="2" height="1.2" fill="#e83030"/><rect x="107.5" y="18" width="1" height="11" fill="#8c96b4"/><path d="M95 26.5 L99 23.0 L99 25.0 L106 25.0 L106 28.0 L99 28.0 L99 30.0 Z" fill="#2f9a1a" stroke="#1f6a10" stroke-width="0.6"/><circle cx="97.5" cy="26.5" r="1.3" fill="#d8f040"/><rect x="99.5" y="716.5" width="7" height="13" rx="1" fill="#fff" stroke="#56679a" stroke-width="1.1"/><rect x="100" y="720" width="6" height="1" fill="#56679a"/><rect x="100" y="723" width="6" height="1" fill="#56679a"/><rect x="101" y="718" width="2" height="1.2" fill="#1e8a1e"/><rect x="104" y="721.5" width="2" height="1.2" fill="#e83030"/><rect x="105.5" y="718" width="1" height="11" fill="#8c96b4"/><path d="M93 725.5 L96 722.5 L96 724.7 L100 724.7 L100 726.3 L96 726.3 L96 728.5 Z" fill="#1f7a10"/><path d="M104 727.5 L101 724.5 L101 726.7 L97 726.7 L97 728.3 L101 728.3 L101 730.5 Z" fill="#1f7a10"/><path d="M174.5 716.5 L180.5 716.5 L183.5 719.5 L183.5 729.5 L174.5 729.5 Z" fill="#f4f8fe" stroke="#b08a30" stroke-width="1.1"/><path d="M180.5 716.5 L180.5 719.5 L183.5 719.5" fill="#e8c070" stroke="#b08a30" stroke-width="0.8"/><rect x="176" y="719" width="3" height="1" fill="#6a84c0"/><rect x="176" y="721" width="6" height="1" fill="#6a84c0"/><rect x="176" y="727" width="4" height="1" fill="#6a84c0"/><path d="M170 724.5 L174 721.0 L174 723.0 L181 723.0 L181 726.0 L174 726.0 L174 728.0 Z" fill="#2f9a1a" stroke="#1f6a10" stroke-width="0.6"/><circle cx="172.5" cy="724.5" r="1.3" fill="#d8f040"/><path d="M250.5 716.5 L256.5 716.5 L259.5 719.5 L259.5 729.5 L250.5 729.5 Z" fill="#f4f8fe" stroke="#b08a30" stroke-width="1.1"/><path d="M256.5 716.5 L256.5 719.5 L259.5 719.5" fill="#e8c070" stroke="#b08a30" stroke-width="0.8"/><rect x="252" y="719" width="3" height="1" fill="#6a84c0"/><rect x="252" y="721" width="6" height="1" fill="#6a84c0"/><rect x="252" y="727" width="4" height="1" fill="#6a84c0"/><path d="M256 726 L252 722.5 L252 724.5 L245 724.5 L245 727.5 L252 727.5 L252 729.5 Z" fill="#2f9a1a" stroke="#1f6a10" stroke-width="0.6"/><circle cx="247" cy="726" r="1.2" fill="#c8e840"/><rect x="328.5" y="716.5" width="7" height="13" rx="1" fill="#fff" stroke="#56679a" stroke-width="1.1"/><rect x="329" y="720" width="6" height="1" fill="#56679a"/><rect x="329" y="723" width="6" height="1" fill="#56679a"/><rect x="330" y="718" width="2" height="1.2" fill="#1e8a1e"/><rect x="333" y="721.5" width="2" height="1.2" fill="#e83030"/><rect x="334.5" y="718" width="1" height="11" fill="#8c96b4"/><path d="M322 726.5 L326 723.0 L326 725.0 L333 725.0 L333 728.0 L326 728.0 L326 730.0 Z" fill="#2f9a1a" stroke="#1f6a10" stroke-width="0.6"/><circle cx="324.5" cy="726.5" r="1.3" fill="#d8f040"/><rect x="420.5" y="716.5" width="7" height="13" rx="1" fill="#fff" stroke="#56679a" stroke-width="1.1"/><rect x="421" y="720" width="6" height="1" fill="#56679a"/><rect x="421" y="723" width="6" height="1" fill="#56679a"/><rect x="422" y="718" width="2" height="1.2" fill="#1e8a1e"/><rect x="425" y="721.5" width="2" height="1.2" fill="#e83030"/><rect x="426.5" y="718" width="1" height="11" fill="#8c96b4"/><path d="M426 726.5 L422 723.0 L422 725.0 L414 725.0 L414 728.0 L422 728.0 L422 730.0 Z" fill="#2f9a1a" stroke="#1f6a10" stroke-width="0.6"/><circle cx="416" cy="726.5" r="1.2" fill="#c8e840"/><path d="M506.5 132.5 L512.5 127.5 L512.5 130.5 L519.5 130.5 L519.5 135.5 L512.5 135.5 L512.5 138.5 Z" fill="none" stroke="#aab0b6" stroke-width="1"/><path d="M651.5 132.5 L645.5 127.5 L645.5 130.5 L638.5 130.5 L638.5 135.5 L645.5 135.5 L645.5 138.5 Z" fill="none" stroke="#aab0b6" stroke-width="1"/><circle cx="546.5" cy="129.5" r="3.6" fill="none" stroke="#aab0b6" stroke-width="1.2"/><line x1="543.5" y1="132.5" x2="539" y2="137.5" stroke="#aab0b6" stroke-width="2"/><rect x="546" y="135" width="7" height="3" fill="#aab0b6"/><circle cx="579.5" cy="129.5" r="3.6" fill="none" stroke="#aab0b6" stroke-width="1.2"/><line x1="576.5" y1="132.5" x2="572" y2="137.5" stroke="#aab0b6" stroke-width="2"/><path d="M571 140 L575 135.5 L577 138.5 L580 138.5 L580 135 L586 135 L586 138.5 L587 139.5" fill="none" stroke="#aab0b6" stroke-width="1.1"/><circle cx="612" cy="128.8" r="3.7" fill="#e8f0fa" stroke="#34508a" stroke-width="1.2"/><line x1="609" y1="132" x2="604.5" y2="137.5" stroke="#4a6aa8" stroke-width="2"/><path d="M614.5 132.5 h2.5 v2.5 h2.5 v2.5 h-2.5 v2.5 h-2.5 v-2.5 h-2.5 v-2.5 h2.5 Z" fill="#1f9a2a" stroke="#0a5a14" stroke-width="0.8"/></svg>
</body></html>
